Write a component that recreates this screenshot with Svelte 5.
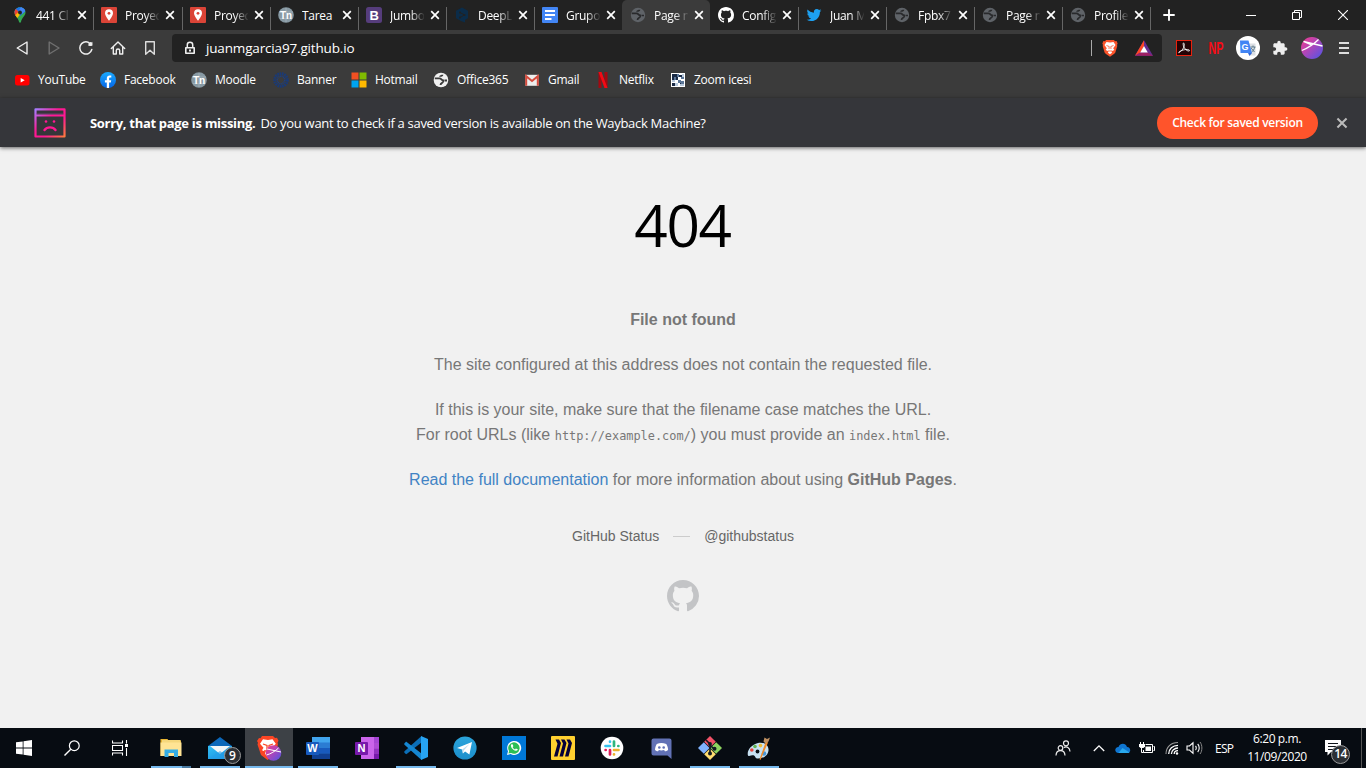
<script>
  const tabs = [
    { icon: 'maps', title: '441 Cl' },
    { icon: 'pin', title: 'Proyec' },
    { icon: 'pin', title: 'Proyec' },
    { icon: 'moodle', title: 'Tarea' },
    { icon: 'bootstrap', title: 'Jumbo' },
    { icon: 'deepl', title: 'DeepL' },
    { icon: 'docs', title: 'Grupo' },
    { icon: 'globe-dim', title: 'Page n', active: true },
    { icon: 'github', title: 'Config' },
    { icon: 'twitter', title: 'Juan M' },
    { icon: 'globe-dim', title: 'Fpbx7' },
    { icon: 'globe-dim', title: 'Page n' },
    { icon: 'globe-dim', title: 'Profile' }
  ];
  const bookmarks = [
    { icon: 'youtube', label: 'YouTube' },
    { icon: 'facebook', label: 'Facebook' },
    { icon: 'moodle', label: 'Moodle' },
    { icon: 'banner', label: 'Banner' },
    { icon: 'microsoft', label: 'Hotmail' },
    { icon: 'globe-light', label: 'Office365' },
    { icon: 'gmail', label: 'Gmail' },
    { icon: 'netflix', label: 'Netflix' },
    { icon: 'mosaic', label: 'Zoom icesi' }
  ];
  const apps = [
    { icon: 'explorer', open: true, stacked: true },
    { icon: 'mail', open: true, badge: 9 },
    { icon: 'brave-app', open: true, active: true },
    { icon: 'word', open: true },
    { icon: 'onenote' },
    { icon: 'vscode', open: true },
    { icon: 'telegram' },
    { icon: 'whatsapp' },
    { icon: 'miro' },
    { icon: 'slack' },
    { icon: 'discord' },
    { icon: 'git', open: true },
    { icon: 'paint', open: true }
  ];
  // Icons that carry lettering: box size, text and its placement.
  const lettered = {
    moodle: { box: 16, text: 'Tn', x: 2, y: 12, size: 10.5, width: 12, fill: '#fff' },
    bootstrap: { box: 16, text: 'B', x: 3.6, y: 12.6, size: 13, width: 9.4, fill: '#fff' },
    np: { box: 16, text: 'NP', x: 0.5, y: 14, size: 17, width: 15, fill: '#f50c16' },
    translate: { box: 24, text: 'G', x: 5.5, y: 14, size: 9, width: 7, fill: '#fff' },
    word: { box: 24, text: 'W', x: 1.3, y: 16.3, size: 11, width: 10.4, fill: '#fff' },
    onenote: { box: 24, text: 'N', x: 2.5, y: 16.3, size: 11, width: 8, fill: '#fff' }
  };
</script>

{#snippet icon(name, cls)}
  {#if lettered[name]}
    {@const l = lettered[name]}
    <svg class={cls} viewBox="0 0 {l.box} {l.box}" aria-hidden="true">
      {#if name !== 'np'}<use href={'#' + name} width={l.box} height={l.box} />{/if}
      <text class="letter" x={l.x} y={l.y} font-size={l.size} textLength={l.width} lengthAdjust="spacingAndGlyphs" fill={l.fill}>{l.text}</text>
    </svg>
  {:else}
    <svg class={cls} aria-hidden="true"><use href={'#' + name} /></svg>
  {/if}
{/snippet}

<svg class="defs" aria-hidden="true">
  <defs>
    <linearGradient id="g-sad" x1="0" y1="0" x2="1" y2="1"><stop offset="0" stop-color="#a67dff" /><stop offset=".4" stop-color="#ff1893" /><stop offset=".65" stop-color="#ff1893" /><stop offset="1" stop-color="#ff7a3d" /></linearGradient>
    <linearGradient id="g-prof" x1="0" y1="0" x2="1" y2="1"><stop offset="0" stop-color="#f43a8c" /><stop offset=".45" stop-color="#b146b8" /><stop offset="1" stop-color="#4a55e8" /></linearGradient>
    <linearGradient id="g-fb" x1="0" y1="0" x2="0" y2="1"><stop offset="0" stop-color="#19aaff" /><stop offset="1" stop-color="#0565e6" /></linearGradient>
    <linearGradient id="g-tg" x1="0" y1="0" x2="0" y2="1"><stop offset="0" stop-color="#2ba5dc" /><stop offset="1" stop-color="#1c8fcb" /></linearGradient>
    <linearGradient id="g-mail" x1="0" y1="0" x2="1" y2="1"><stop offset="0" stop-color="#35c0f4" /><stop offset="1" stop-color="#1389e0" /></linearGradient>
  </defs>

  <symbol id="maps" viewBox="0 0 16 16">
    <clipPath id="c-maps"><path d="M8 .3c3.2 0 5.500 2.300 5.500 5.200 0 3.700-3.500 4.700-4.500 9.200-.2 1.300-1.700 1.300-2 0C6 10.200 2.500 9.200 2.500 5.500 2.500 2.600 4.800.3 8 .3z" /></clipPath>
    <g clip-path="url(#c-maps)"><rect width="16" height="16" fill="#34a853" /><path d="M0 0h16v2L8 9 0 4z" fill="#1a73e8" /><path d="M9 0h7v2L10 7 7 3z" fill="#4285f4" /><path d="M0 2l3-1 4 4-4 6-3-1z" fill="#ea4335" /><path d="M2.500 9L6.300 5l2 2.300L4.500 12z" fill="#fbbc04" /></g>
    <circle cx="8" cy="5.500" r="1.900" fill="#222" />
  </symbol>
  <symbol id="pin" viewBox="0 0 16 16"><rect width="16" height="16" rx="1" fill="#db4437" /><path d="M8 2.300a4 4 0 0 0-4 4c0 2.800 4 7.400 4 7.400s4-4.600 4-7.400a4 4 0 0 0-4-4z" fill="#fff" /><circle cx="8" cy="6.300" r="1.400" fill="#db4437" /></symbol>
  <symbol id="moodle" viewBox="0 0 16 16"><circle cx="8" cy="8" r="7.800" fill="#8799a3" /><path d="M1 5h14M2 11.500h12M8 1v14" stroke="#a9b7bf" stroke-width=".7" /></symbol>
  <symbol id="bootstrap" viewBox="0 0 16 16"><rect width="16" height="16" rx="2.500" fill="#563d7c" /></symbol>
  <symbol id="deepl" viewBox="0 0 16 16"><path d="M8 .5l6 3.300v7.500L11 13v2.500L7.500 14.300 2 11.300V3.800z" fill="#0b2c49" /><path d="M6 5.500l4.500 2.400L6 10.500" stroke="#222" fill="none" /><circle cx="6" cy="5.500" r="1" fill="#222" /><circle cx="10.500" cy="8" r="1" fill="#222" /><circle cx="6" cy="10.500" r="1" fill="#222" /></symbol>
  <symbol id="docs" viewBox="0 0 16 16"><rect width="16" height="16" rx="1" fill="#4285f4" /><path d="M3 4h10M3 8h10M3 12h6.500" stroke="#fff" stroke-width="1.800" /></symbol>
  <symbol id="globe-dim" viewBox="0 0 16 16"><circle cx="8" cy="8" r="7.200" fill="#5f6368" /><path d="M1.800 6.300h4.700c2 0 1.800 2 3.700 2v1.300c0 1.500-2.700 1-2.700 3.400M9.500 2.800c0 1.500-2.500.6-2.500 2M14 8.500h-2.500" fill="none" stroke="#292a2c" stroke-width="1.700" /></symbol>
  <symbol id="globe-light" viewBox="0 0 16 16"><circle cx="8" cy="8" r="7.300" fill="#f1f1f1" /><path d="M1.800 6.300h4.700c2 0 1.800 2 3.700 2v1.300c0 1.500-2.700 1-2.700 3.400M9.500 2.800c0 1.500-2.500.6-2.500 2M14 8.500h-2.500" fill="none" stroke="#3b3b3b" stroke-width="1.800" /></symbol>
  <symbol id="github" viewBox="0 0 16 16"><path fill="currentColor" d="M8 0C3.580 0 0 3.580 0 8c0 3.540 2.290 6.530 5.470 7.590.4.070.55-.17.55-.38 0-.19-.01-.82-.01-1.490-2.010.37-2.530-.49-2.690-.94-.09-.23-.48-.94-.82-1.130-.28-.15-.68-.52-.01-.53.63-.01 1.080.58 1.230.82.72 1.210 1.870.87 2.330.66.070-.52.28-.87.51-1.070-1.780-.2-3.640-.89-3.640-3.950 0-.87.31-1.590.82-2.150-.08-.2-.36-1.020.08-2.120 0 0 .67-.21 2.200.82.64-.18 1.320-.27 2-.27.68 0 1.360.09 2 .27 1.530-1.040 2.200-.82 2.200-.82.44 1.100.16 1.920.08 2.120.51.56.82 1.270.82 2.150 0 3.070-1.870 3.750-3.650 3.950.29.25.54.73.54 1.480 0 1.070-.01 1.930-.01 2.200 0 .21.15.46.55.38A8.013 8.013 0 0 0 16 8c0-4.420-3.580-8-8-8z" /></symbol>
  <symbol id="twitter" viewBox="-1 -1 26 26"><path fill="#1da1f2" d="M23.953 4.570a10 10 0 0 1-2.825.775 4.958 4.958 0 0 0 2.163-2.723c-.951.555-2.005.959-3.127 1.184a4.920 4.920 0 0 0-8.384 4.482C7.690 8.095 4.067 6.130 1.640 3.162a4.822 4.822 0 0 0-.666 2.475c0 1.710.87 3.213 2.188 4.096a4.904 4.904 0 0 1-2.228-.616v.06a4.923 4.923 0 0 0 3.946 4.827 4.996 4.996 0 0 1-2.212.085 4.936 4.936 0 0 0 4.604 3.417 9.867 9.867 0 0 1-6.102 2.105c-.39 0-.779-.023-1.170-.067a13.995 13.995 0 0 0 7.557 2.209c9.053 0 13.998-7.496 13.998-13.985 0-.21 0-.42-.015-.63A9.935 9.935 0 0 0 24 4.590z" /></symbol>

  <symbol id="youtube" viewBox="0 0 16 16"><rect x="1" y="3" width="14.500" height="10.500" rx="2.500" fill="#f00" /><path d="M6.700 6v4.600l4-2.300z" fill="#fff" /></symbol>
  <symbol id="facebook" viewBox="0 0 16 16"><circle cx="8" cy="8" r="8" fill="url(#g-fb)" /><path d="M6.800 16v-5.600H4.900V8.200h1.900V6.500c0-2 1.100-3.100 2.900-3.100l1.600.1v1.900h-1c-.9 0-1.200.5-1.200 1.200v1.600h2.100l-.4 2.200H9.100V16z" fill="#fff" /></symbol>
  <symbol id="banner" viewBox="0 0 16 16"><circle cx="8" cy="8" r="6.300" fill="none" stroke="#193a78" stroke-width="3" stroke-dasharray="1.600 .7" /><circle cx="8" cy="8" r="3.700" fill="none" stroke="#1d3f80" stroke-width="1.500" stroke-dasharray="1 .6" /></symbol>
  <symbol id="microsoft" viewBox="0 0 16 16"><path d="M.5.500h7v7h-7z" fill="#f25022" /><path d="M8.500.500h7v7h-7z" fill="#7fba00" /><path d="M.5 8.500h7v7h-7z" fill="#00a4ef" /><path d="M8.500 8.500h7v7h-7z" fill="#ffb900" /></symbol>
  <symbol id="gmail" viewBox="0 0 16 16"><path d="M1.500 2.800h13v11h-13z" fill="#eceded" /><path d="M2.200 13.800V4.200L8 9l5.800-4.800v9.600" fill="none" stroke="#d54b3d" stroke-width="2" /></symbol>
  <symbol id="netflix" viewBox="0 0 16 16"><path d="M3.500 0h3v16h-3zM9.500 0h3v16h-3z" fill="#a30810" /><path d="M3.500 0h3l6 16h-3z" fill="#f30a15" /></symbol>
  <symbol id="mosaic" viewBox="0 0 16 16"><path d="M1 1h14v14H1z" fill="#fff" /><path d="M2 2h5v3H4v3H2zM9 3h3v2H9zM6 5h2v3H6zM2 11h3v3H2zM10 10h2v2h-2z" fill="#1a2a45" /><path d="M7 2h2v3H7zM4 5h2v3H4zM8 8h3v3H8zM11 9h3v3h-3zM11 5h3v2h-3z" fill="#5b7698" /><path d="M12 2h2v3h-2zM5 11h3v3H5zM2 8h3v2H2zM10 12h4v2h-4z" fill="#b8c9dc" /></symbol>

  <symbol id="back" viewBox="0 0 16 16"><path d="M13 2v12L3.200 8z" fill="none" stroke="#eee" stroke-width="1.400" stroke-linejoin="round" /></symbol>
  <symbol id="forward" viewBox="0 0 16 16"><path d="M3.200 2v12L13 8z" fill="none" stroke="#707070" stroke-width="1.400" stroke-linejoin="round" /></symbol>
  <symbol id="reload" viewBox="0 0 16 16"><path d="M13.800 9.500A6.100 6.100 0 1 1 10.500 2.400" fill="none" stroke="#eee" stroke-width="1.500" stroke-linecap="round" /><path d="M10 5.800l4.400-4v4z" fill="#eee" /><circle cx="12.300" cy="4" r="2" fill="#eee" /></symbol>
  <symbol id="home" viewBox="0 0 16 16"><path d="M1.300 8.400L8 1.900l6.700 6.500M3.300 7v7h3v-3.500c0-2 3.400-2 3.400 0V14h3V7" fill="none" stroke="#eee" stroke-width="1.400" stroke-linejoin="round" stroke-linecap="round" /></symbol>
  <symbol id="bookmark" viewBox="0 0 16 16"><path d="M3.700 1.800h8.600v12.500L8 10.300l-4.300 4z" fill="none" stroke="#ddd" stroke-width="1.400" stroke-linejoin="round" /></symbol>
  <symbol id="lock" viewBox="0 0 12 14"><path d="M3.300 6V3.700c0-3.300 5.400-3.300 5.400 0V6" fill="none" stroke="#f0f0f0" stroke-width="1.500" /><path d="M1.800 6.800h8.400v5.400H1.800z" fill="none" stroke="#f0f0f0" stroke-width="1.600" stroke-linejoin="round" /><path d="M5 8.500h2v2H5z" fill="#f0f0f0" /></symbol>
  <symbol id="brave" viewBox="0 0 16 18"><path d="M4 1h8l1 1.200 1.600-.2 1 2.500-.6 1.500.3 1-2 6.500c-.2.600-1 1.200-1.400 1.500L8 17.700 4 15c-.5-.4-1.200-1-1.400-1.500L.7 7l.3-1L.4 4.500l1-2.500L3 2.200z" fill="#fb542b" /><path d="M8 3.600l3.500-.5 2 3-2.300 3.200 1.200 1.700-2.800 1.200.4 1.600L8 15.200l-2-1.400.4-1.600L3.600 11l1.200-1.700L2.500 6.100l2-3z" fill="#fff" /><path d="M4.500 6.500l2.700 1L7 10M11.500 6.500l-2.700 1L9 10M6 12h4" fill="none" stroke="#fb542b" stroke-width=".8" /></symbol>
  <symbol id="bat" viewBox="0 0 18 16"><path d="M9 .3L0 15.700h18z" fill="#662d91" /><path d="M9 .3L0 15.700l5.300-3.200L9 6z" fill="#ff4724" /><path d="M0 15.700h18l-5.300-3.200H5.300z" fill="#9e1f63" /><path d="M9 6l-3.800 6.500h7.600z" fill="#fff" /></symbol>
  <symbol id="acrobat" viewBox="0 0 16 16"><rect x=".5" y=".5" width="15" height="15" fill="#240305" stroke="#e8210d" /><path d="M2.700 12.700C7.500 10 9 5.500 8 3.300 7 2 6.800 5 8 7.200c1.200 2.500 3.500 4 5 3.800 1.500-.4-.2-1.900-3-1.500-3.400.4-7.600 2-7.300 3.200z" fill="none" stroke="#eee" /></symbol>
  <symbol id="translate" viewBox="0 0 24 24"><circle cx="12" cy="12" r="12" fill="#fff" /><path d="M10 7.500h9.500v12H14z" fill="#dcdfe4" /><path d="M4 4.500h8.500L16 17H4.500z" fill="#4285f4" /><path d="M12 17h4l-2.500 3z" fill="#3367d6" /><path d="M14.500 11h5M17 9.500v1.500M15 12l3.500 4M18.800 11c-.6 2.500-1.800 4-3 5" fill="none" stroke="#607d8b" /></symbol>
  <symbol id="puzzle" viewBox="0 0 24 24"><path fill="#eee" d="M20.500 11H19V7c0-1.100-.9-2-2-2h-4V3.500C13 2.120 11.880 1 10.500 1S8 2.120 8 3.500V5H4c-1.100 0-1.990.9-1.990 2v3.800H3.500c1.490 0 2.700 1.210 2.700 2.700s-1.210 2.700-2.700 2.700H2V20c0 1.100.9 2 2 2h3.800v-1.500c0-1.490 1.210-2.700 2.700-2.700 1.490 0 2.700 1.210 2.700 2.700V22H17c1.100 0 2-.9 2-2v-4h1.500c1.380 0 2.500-1.120 2.500-2.500S21.880 11 20.500 11z" /></symbol>
  <symbol id="profile" viewBox="0 0 22 22"><circle cx="11" cy="11" r="11" fill="url(#g-prof)" /><path d="M2.500 4.500L21.500 9M.8 13.500C7 11 13 7 17.500 2.500M2.500 4.500l8 3.500" fill="none" stroke="#fff" stroke-width="1.300" /></symbol>
  <symbol id="close" viewBox="0 0 10 10"><path d="M1.200 1.200l7.600 7.600M8.800 1.200L1.200 8.800" stroke="currentColor" stroke-width="1.700" /></symbol>
  <symbol id="sad" viewBox="0 0 32 30"><path d="M1.500 1.300h29v27.200h-29zM1.500 7.500h29" fill="none" stroke="url(#g-sad)" stroke-width="2.200" stroke-linejoin="round" /><path d="M3 6h26" stroke="#c84dbd" stroke-width="1" opacity=".4" /><circle cx="12" cy="13.500" r="1.300" fill="#ff1893" /><circle cx="20" cy="13.500" r="1.300" fill="#ff1893" /><path d="M10.500 22c2.500-3.500 8.500-3.500 11 0" fill="none" stroke="#ff1893" stroke-width="2.400" stroke-linecap="round" /></symbol>

  <symbol id="windows" viewBox="0 0 16 16"><path d="M0 2.300L6.700 1.400v6.200H0zM7.500 1.300L16 0v7.600H7.500zM0 8.400h6.700v6.200L0 13.700zM7.500 8.400H16V16l-8.500-1.300z" fill="#fff" /></symbol>
  <symbol id="search" viewBox="0 0 16 16"><circle cx="10.300" cy="5.700" r="4.900" fill="none" stroke="#fff" stroke-width="1.200" /><path d="M6.800 9.200L.5 15.500" stroke="#fff" stroke-width="1.400" /></symbol>
  <symbol id="taskview" viewBox="0 0 16 16"><path d="M.5.500v2.500h10V.5M.5 15.500V13h10v2.500M.5 5.500h10v5H.5zM14.500 0v3.500M14.500 8v8" fill="none" stroke="#fff" stroke-width="1.100" /><path d="M13 4h3v3h-3z" fill="#fff" /></symbol>
  <symbol id="explorer" viewBox="0 0 24 24"><path d="M1.500 3h7l1 1.500H22V20H1.500z" fill="#e9b632" /><path d="M3 4h18.500v3H3z" fill="#f5d77c" /><path d="M1.500 6.500h21V20h-21z" fill="#ffe494" /><path d="M5.500 13.500h13.500v7.500h-4v-4h-5.500v4h-4z" fill="#35ade5" /></symbol>
  <symbol id="mail" viewBox="0 0 26 24"><path d="M1 10L13 1l12 9v2H1z" fill="#0c68ba" /><path d="M1 10h24v13H1z" fill="url(#g-mail)" /><path d="M3 10h20l-10 8z" fill="#f2f5f7" /><path d="M1 23l12-8 12 8z" fill="#249fe8" opacity=".6" /></symbol>
  <symbol id="brave-app" viewBox="0 0 26 26"><path d="M6 1h11l2 2 2-.2 1.500 3-1 2 .5 1.500L19 20l-7.500 5L5 20 1.500 9.500 2 7.800 1 6l2-3 1.500.2z" fill="#fb4524" /><path d="M12 5l4.500-.8 3.300 4.500-3.500 4 1.500 2.500-3.800 1.500.5 2.200L12 21l-3-2 .5-2.300L6 15.200l1.500-2.500L4 8.700l3-4.500z" fill="#fff" /><path d="M7 9l4 1.500v4M17 9l-4 1.500v4M8 16h8" fill="none" stroke="#fb4524" stroke-width="1.300" /><circle cx="17.500" cy="18" r="7.800" fill="url(#g-prof)" /><path d="M11 14l14 3M10.500 20c4-1 9-4 12-7" fill="none" stroke="#fff" /></symbol>
  <symbol id="word" viewBox="0 0 24 24"><path d="M6 1h18v22H6z" fill="#2b7cd3" /><path d="M6 1h18v5.500H6z" fill="#41a5ee" /><path d="M6 12h18v5.500H6z" fill="#185abd" /><path d="M6 17.500h18V23H6z" fill="#103f91" /><rect y="6" width="13" height="13" rx="1" fill="#185abd" /></symbol>
  <symbol id="onenote" viewBox="0 0 24 24"><path d="M6 1h18v22H6z" fill="#ca64ea" /><path d="M19 1h5v6h-5z" fill="#a545d3" /><path d="M19 7h5v5.500h-5z" fill="#ae4bd5" /><path d="M19 12.500h5V18h-5z" fill="#9332bf" /><path d="M19 18h5v5h-5z" fill="#7719aa" /><rect y="6" width="13" height="13" rx="1" fill="#7719aa" /></symbol>
  <symbol id="vscode" viewBox="0 0 24 24"><path d="M17.500 6.500L3 17.800c-.6.500-1 .5-1.500 0l-1-1c-.5-.5-.5-1 0-1.500L17.500 0z" fill="#0b6fb8" /><path d="M17.500 17.500L3 6.200c-.6-.5-1-.5-1.500 0l-1 1c-.5.500-.5 1 0 1.500L17.500 24z" fill="#1587d2" /><path d="M17 0l7 3v18l-7 3z" fill="#27a4f2" /></symbol>
  <symbol id="telegram" viewBox="0 0 24 24"><circle cx="12" cy="12" r="11.600" fill="url(#g-tg)" /><path d="M4 12L19 6l-2.600 12.500-4.300-3-2.200 2.100-.7-4z" fill="#fff" /><path d="M9.200 13.500L16.500 8l-5.800 6.500-.7 3z" fill="#bcdcee" /></symbol>
  <symbol id="whatsapp" viewBox="0 0 24 24"><path d="M0 0h24v24H0z" fill="#0078d7" /><path d="M5 19l1-3.800A7 7 0 1 1 8.700 18z" fill="#fff" /><path d="M6.400 17.600l.7-2.500a5.700 5.700 0 1 1 2 1.900z" fill="#2bbf55" /><path d="M9.500 8.300c-1.800 1.500.8 6 4.500 6.500 1 .1 2-.8 1.700-1.500l-1.800-.8-.9.900c-1.100-.4-2-1.300-2.400-2.400l.8-.8-.8-1.900z" fill="#fff" /></symbol>
  <symbol id="miro" viewBox="0 0 24 24"><rect width="24" height="24" rx="1" fill="#ffd02f" /><path d="M4.500 3.500H8l2 3.500-3.500 13.500H3L6.500 7.800zM10 3.500h3.500l2 3.500L12 20.500H8.500L12 7.500zM15.500 3.500H19l2 3.500-3.500 13.500H14l3.500-13z" fill="#050038" /></symbol>
  <symbol id="slack" viewBox="0 0 24 24"><circle cx="12" cy="12" r="11.300" fill="#fff" /><g fill="none" stroke-width="2.700" stroke-linecap="round"><path d="M5.500 10h4.500M10 5.700v.1" stroke="#36c5f0" /><path d="M14 5.500V10M18.300 10h.1" stroke="#2eb67d" /><path d="M14 14h4.500M14 18.300v.1" stroke="#ecb22e" /><path d="M10 14v4.500M5.600 14h.1" stroke="#e01e5a" /></g></symbol>
  <symbol id="discord" viewBox="0 0 24 24"><path d="M4.500 2.500h16a2 2 0 0 1 2 2V23l-4-3.500h-14a2 2 0 0 1-2-2v-13a2 2 0 0 1 2-2z" fill="#6272b5" /><path d="M7.800 8c3-1.500 6-1.500 9.500 0 1.200 2 1.800 4 1.800 6-1 1-2.100 1.300-3.200 1.300l-.8-1.300c-2 .5-3.700.5-5.200 0l-.8 1.300c-1.200 0-2.200-.4-3.100-1.300C6 12 6.800 9.500 7.800 8z" fill="#fff" /><circle cx="10.300" cy="11.500" r="1.300" fill="#6272b5" /><circle cx="14.700" cy="11.500" r="1.300" fill="#6272b5" /></symbol>
  <symbol id="git" viewBox="0 0 24 24"><path d="M12 0l5.800 5.800L12 11.600 6.200 5.800z" fill="#f25268" /><path d="M5.800 6.200l5.800 5.800-5.800 5.800L0 12z" fill="#80b3ff" /><path d="M18.200 6.200L24 12l-5.800 5.800-5.800-5.800z" fill="#8dd35f" /><path d="M12 12.400l5.800 5.800L12 24l-5.800-5.800z" fill="#ffdd70" /><path d="M8 4l4 4v10M12 9l4.500 4.500" fill="none" stroke="#111923" stroke-width="1.600" /><circle cx="12" cy="8" r="1.900" fill="#111923" /><circle cx="12" cy="17.500" r="2" fill="#111923" /><circle cx="16.500" cy="12.800" r="2" fill="#111923" /></symbol>
  <symbol id="paint" viewBox="0 0 24 24"><path d="M11 7c6-1.500 11 2 10.500 7.500C21 20 15.500 23 10 22.500c-2-.3-1.500-2.500-3-3-2-.7-5 1.500-6 0C-.5 15 4 8.700 11 7z" fill="#c8e2f2" /><circle cx="4.800" cy="14" r="1.800" fill="#e4473d" /><circle cx="8" cy="10.500" r="1.800" fill="#62b552" /><circle cx="13.500" cy="9.600" r="1.800" fill="#eebb38" /><circle cx="10.500" cy="15.500" r="1.900" fill="#0a1016" /><circle cx="17" cy="17.500" r="2.200" fill="#4595d8" /><path d="M19 5l2 1.500L13.500 24l-1-.7z" fill="#ee8c2d" /><path d="M17.500 1.500L20 3l3-1.500-1.500 4-3 2-2-2z" fill="#bd8f61" /></symbol>

  <symbol id="people" viewBox="0 0 16 16"><g fill="none" stroke="#eee" stroke-width="1.200"><circle cx="5.500" cy="8" r="2.300" /><path d="M1 15.500c.3-6.500 8.700-6.500 9 0" /><circle cx="11" cy="3.300" r="2.500" /><path d="M8.800 7.500c3-1.800 6 .2 6.200 4" /></g></symbol>
  <symbol id="chevron" viewBox="0 0 12 8"><path d="M.8 7L6 1.800 11.200 7" fill="none" stroke="#fff" stroke-width="1.300" /></symbol>
  <symbol id="onedrive" viewBox="0 0 16 10"><path d="M3.500 4C5 0 10.500-.5 12 4c3.300-.2 4.500 4.500 1.500 6h-10C-.8 9.500-.8 4.300 3.500 4z" fill="#0f76d1" /><path d="M3.500 10L7.500 5l7 4.500-1.200.5z" fill="#29a8ec" /></symbol>
  <symbol id="battery" viewBox="0 0 16 14"><path d="M6.500 3.500h7v8h-9V9M14.500 5.500h1v4h-1" fill="none" stroke="#fff" /><path d="M6.500 5.500h5.500V10H6.500z" fill="#fff" /><path d="M1.500 1v2M4.500 1v2M2.500 7v4.500h2" fill="none" stroke="#fff" /><path d="M0 3h6v2.500L4.500 7h-3L0 5.500z" fill="#fff" /></symbol>
  <symbol id="wifi" viewBox="0 0 14 14"><path d="M1 13C1 6 6 1.500 13 1.500" fill="none" stroke="#999" stroke-width="1.100" /><path d="M3.700 13c0-5 4-8.700 9.300-8.700M6.400 13c0-3.500 3-6 6.600-6" fill="none" stroke="#fff" stroke-width="1.300" /><path d="M9.200 13c0-2 1.800-3.300 3.800-3.300" fill="none" stroke="#fff" stroke-width="1.300" /><circle cx="12" cy="12.500" r="1.200" fill="#fff" /></symbol>
  <symbol id="sound" viewBox="0 0 17 14"><path d="M1 5h2.500L7 1.800v10.500L3.500 9H1zM9.500 5c1 1 1 3 0 4M11.700 3c2 2 2 6 0 8" fill="none" stroke="#fff" stroke-width="1.100" /><path d="M14 1c2.500 3 2.500 9 0 12" fill="none" stroke="#888" /></symbol>
  <symbol id="notes" viewBox="0 0 16 16"><path d="M0 0h16v12H6l-3.500 3.500V12H0z" fill="#fff" /><path d="M3 3.500h10M3 6.500h10M3 9.500h6" stroke="#10151b" /></symbol>
</svg>

<div class="screen">
  <header class="tabstrip">
    <div class="tabs">
      {#each tabs as tab}
        <div class="tab" class:active={tab.active}>
          {@render icon(tab.icon, 'i16')}
          <span class="title">{tab.title}</span>
          {@render icon('close', 'x')}
        </div>
      {/each}
    </div>
    <svg class="plus" viewBox="0 0 12 12"><path d="M6 .3v11.400M.3 6h11.400" stroke="#fff" stroke-width="1.900" /></svg>
    <div class="winctl">
      <svg viewBox="0 0 10 10"><path d="M0 5.500h10" stroke="#fff" /></svg>
      <svg viewBox="0 0 10 10"><path d="M.5 2.500h7v7h-7zM2.500 2.500v-2h7v7h-2" fill="none" stroke="#fff" /></svg>
      <svg viewBox="0 0 10 10"><path d="M0 0l10 10M10 0L0 10" stroke="#fff" stroke-width="1.100" /></svg>
    </div>
  </header>

  <nav class="toolbar">
    <div class="navbtns">
      {#each ['back', 'forward', 'reload', 'home', 'bookmark'] as name}
        {@render icon(name, 'i16')}
      {/each}
    </div>
    <div class="address">
      {@render icon('lock', 'lock')}
      <span class="url">juanmgarcia97.github.io</span>
      <i class="divider"></i>
      {@render icon('brave', 'shield')}
      {@render icon('bat', 'bat')}
    </div>
    <div class="extensions">
      {@render icon('acrobat', 'i16')}
      {@render icon('np', 'i16')}
      {@render icon('translate', 'i24')}
      {@render icon('puzzle', 'i16')}
      {@render icon('profile', 'i22')}
      <svg class="menu" viewBox="0 0 10 12"><path d="M0 1h10M0 6h10M0 11h10" stroke="#ddd" stroke-width="1.800" /></svg>
    </div>
  </nav>

  <div class="bookmarks">
    {#each bookmarks as b}
      <div class="bookmark">{@render icon(b.icon, 'i16')}<span>{b.label}</span></div>
    {/each}
  </div>

  <section class="infobar">
    {@render icon('sad', 'sad')}
    <strong>Sorry, that page is missing.</strong>
    <span class="ask">Do you want to check if a saved version is available on the Wayback Machine?</span>
    <button>Check for saved version</button>
    {@render icon('close', 'dismiss')}
  </section>

  <main>
    <h1>404</h1>
    <p><strong>File not found</strong></p>
    <p>The site configured at this address does not contain the requested file.</p>
    <p>If this is your site, make sure that the filename case matches the URL.<br />For root URLs (like <code>http://example.com/</code>) you must provide an <code>index.html</code> file.</p>
    <p><a href="#docs">Read the full documentation</a> for more information about using <strong>GitHub Pages</strong>.</p>
    <div class="status"><span>GitHub Status</span><i></i><span>@githubstatus</span></div>
    {@render icon('github', 'octo')}
  </main>

  <footer class="taskbar">
    <div class="system">
      {#each ['windows', 'search', 'taskview'] as name}
        <div class="sys">{@render icon(name, 'i16')}</div>
      {/each}
    </div>
    <div class="apps">
      {#each apps as app}
        <div class="app" class:open={app.open} class:active={app.active} class:stacked={app.stacked}>
          {@render icon(app.icon, app.icon === 'mail' || app.icon === 'brave-app' ? 'i26' : 'i24')}
          {#if app.badge}<b class="badge">{app.badge}</b>{/if}
        </div>
      {/each}
    </div>
    <div class="tray">
      {@render icon('people', 'people')}
      {@render icon('chevron', 'chev')}
      {@render icon('onedrive', 'cloud')}
      {@render icon('battery', 'batt')}
      {@render icon('wifi', 'wifi')}
      {@render icon('sound', 'sound')}
      <span class="lang">ESP</span>
      <div class="clock"><span>6:20 p.m.</span><span>11/09/2020</span></div>
      <div class="notif">{@render icon('notes', 'i16')}<b class="badge">14</b></div>
    </div>
    <i class="desktop"></i>
  </footer>
</div>

<style>
  :global(body) { margin: 0; overflow: hidden; }
  .defs { position: absolute; width: 0; height: 0; }
  .screen { width: 1366px; height: 768px; display: flex; flex-direction: column; background: #f1f1f1; font-family: 'Open Sans', 'Noto Sans', sans-serif; font-size: 12px; color: #fff; overflow: hidden; }
  svg { flex: none; display: block; }
  .letter { font-family: 'Liberation Sans', sans-serif; font-weight: 700; }
  .i16 { width: 16px; height: 16px; }
  .i22 { width: 22px; height: 22px; }
  .i24 { width: 24px; height: 24px; }
  .i26 { width: 26px; height: 26px; }

  .tabstrip { height: 30px; flex: none; background: #222; display: flex; align-items: center; padding-left: 5px; }
  .tabs { display: flex; height: 30px; border-right: 1px solid transparent; }
  .tab { width: 88px; height: 30px; box-sizing: border-box; display: flex; align-items: center; padding-left: 8px; background: linear-gradient(#666, #666) left bottom / 1px 23px no-repeat; }
  .tab:first-child { background: none; padding-left: 7px; }
  .tab:nth-child(2) { width: 89px; }
  .tab.active { background: #3b3b3b; border-radius: 5px 5px 0 0; }
  .tab.active + .tab { background: none; }
  .tab:last-child { background: linear-gradient(#666, #666) left bottom / 1px 23px no-repeat, linear-gradient(#666, #666) right bottom / 1px 23px no-repeat; width: 89px; }
  .title { width: 34px; margin-left: 8px; white-space: nowrap; overflow: hidden; letter-spacing: -0.3px; mask-image: linear-gradient(90deg, #000 20px, transparent 35px); }
  .tab:nth-child(4) .title { mask-image: none; }
  .x { width: 10px; height: 10px; margin-left: 6px; }
  .tab:first-child .x { margin-left: 7px; }
  .plus { width: 12px; height: 12px; margin-left: 11px; }
  .winctl { margin-left: auto; display: flex; gap: 36px; padding-right: 18px; }
  .winctl svg { width: 10px; height: 10px; }

  .toolbar { height: 36px; flex: none; background: #3b3b3b; display: flex; align-items: center; }
  .navbtns { display: flex; gap: 16px; padding-left: 14px; }
  .address { margin-left: 14px; width: 990px; height: 28px; background: #222; border-radius: 4px; display: flex; align-items: center; box-sizing: border-box; padding-left: 12px; }
  .lock { width: 12px; height: 14px; }
  .url { font-size: 13.5px; margin-left: 10px; letter-spacing: -0.16px; }
  .divider { width: 1px; height: 16px; background: #aaa; margin-left: auto; }
  .shield { width: 16px; height: 18px; margin-left: 10px; }
  .bat { width: 18px; height: 16px; margin: 0 9px 0 17px; }
  .extensions { display: flex; align-items: center; padding-left: 14px; }
  .extensions :global(svg:nth-child(2)) { margin: 0 12px 0 16px; }
  .extensions :global(svg:nth-child(3)) { margin-right: 12px; }
  .extensions :global(svg:nth-child(4)) { margin-right: 13px; }
  .extensions .menu { width: 10px; height: 12px; margin-left: 16px; }

  .bookmarks { height: 32px; flex: none; box-sizing: border-box; background: #3b3b3b; display: grid; grid-template-columns: 86px 91px 82px 78px 82px 91px 71px 75px 120px; padding: 0 0 4px 14px; align-items: center; }
  .bookmark { display: flex; align-items: center; gap: 8px; letter-spacing: -0.25px; white-space: nowrap; }
  .bookmark span { margin-top: -1px; }

  .infobar { height: 49px; flex: none; background: #35363a; box-shadow: 0 1px 4px #0009; display: flex; align-items: center; padding-left: 34px; box-sizing: border-box; font-size: 13px; white-space: nowrap; position: relative; }
  .sad { width: 32px; height: 30px; }
  .infobar strong { margin-left: 24px; letter-spacing: -0.31px; }
  .ask { margin-left: 5px; letter-spacing: -0.3px; }
  button { margin-left: auto; width: 161px; height: 32px; border: 0; padding: 0; border-radius: 16px; background: #ff542b; color: #fff; font: 600 12px 'Open Sans', sans-serif; letter-spacing: -0.3px; }
  .dismiss { width: 12px; height: 12px; margin: 0 18px; color: #bbb; }

  main { flex: 1; min-height: 0; text-align: center; font-family: 'Liberation Sans', sans-serif; font-size: 16px; line-height: 25px; color: #777; }
  h1 { font: 400 58.5px/60px 'Open Sans', sans-serif; letter-spacing: -1.300px; text-indent: -1px; color: #000; margin: 47px 0 53px; }
  p { margin: 0 0 20px; }
  code { font: 11.9px 'DejaVu Sans Mono', monospace; }
  a { color: #4183c4; text-decoration: none; }
  .status { margin-top: 32px; font-size: 14px; color: #666; display: flex; justify-content: center; align-items: center; }
  .status i { width: 17px; height: 1px; background: #ccc; margin: 0 14px; }
  .octo { width: 32px; height: 32px; color: #c3c4c6; margin: 31px auto 0; }

  .taskbar { height: 40px; flex: none; background: #070c12; display: flex; }
  .system { display: flex; width: 146px; }
  .sys { width: 48px; display: flex; align-items: center; justify-content: center; }
  .apps { display: flex; }
  .app { width: 49px; height: 40px; position: relative; display: flex; align-items: center; justify-content: center; }
  .app.open { background: linear-gradient(#76b9ed, #76b9ed) 5px bottom / 40px 2px no-repeat; }
  .app.stacked { background: linear-gradient(90deg, #76b9ed 31px, #4879a0 31px) 5px bottom / 40px 2px no-repeat; }
  .app.active { margin-left: 1px; width: 48px; background: linear-gradient(#76b9ed, #76b9ed) left bottom / 48px 2px no-repeat #3d4146; }
  .badge { position: absolute; left: 29px; top: 19px; width: 15px; height: 15px; line-height: 15px; border: 1px solid #999; border-radius: 50%; background: #2c3035; font-size: 12px; font-weight: 600; text-align: center; }
  .tray { margin-left: auto; display: flex; align-items: center; white-space: nowrap; }
  .people { width: 16px; height: 16px; }
  .chev { width: 12px; height: 8px; margin-left: 22px; }
  .cloud { width: 16px; height: 10px; margin-left: 10px; }
  .batt { width: 16px; height: 14px; margin-left: 8px; }
  .wifi { width: 14px; height: 14px; margin-left: 10px; }
  .sound { width: 17px; height: 14px; margin-left: 7px; }
  .lang { width: 20px; margin-left: 12px; letter-spacing: -0.7px; }
  .clock { width: 60px; margin-left: 12px; display: flex; flex-direction: column; text-align: center; line-height: 18px; letter-spacing: -0.4px; }
  .notif { position: relative; width: 16px; height: 16px; margin: 0 20px 0 18px; }
  .notif .badge { left: 6px; top: 5px; width: 17px; height: 17px; line-height: 16px; letter-spacing: -0.6px; }
  .desktop { width: 1px; background: #555; margin-right: 4px; }
</style>
